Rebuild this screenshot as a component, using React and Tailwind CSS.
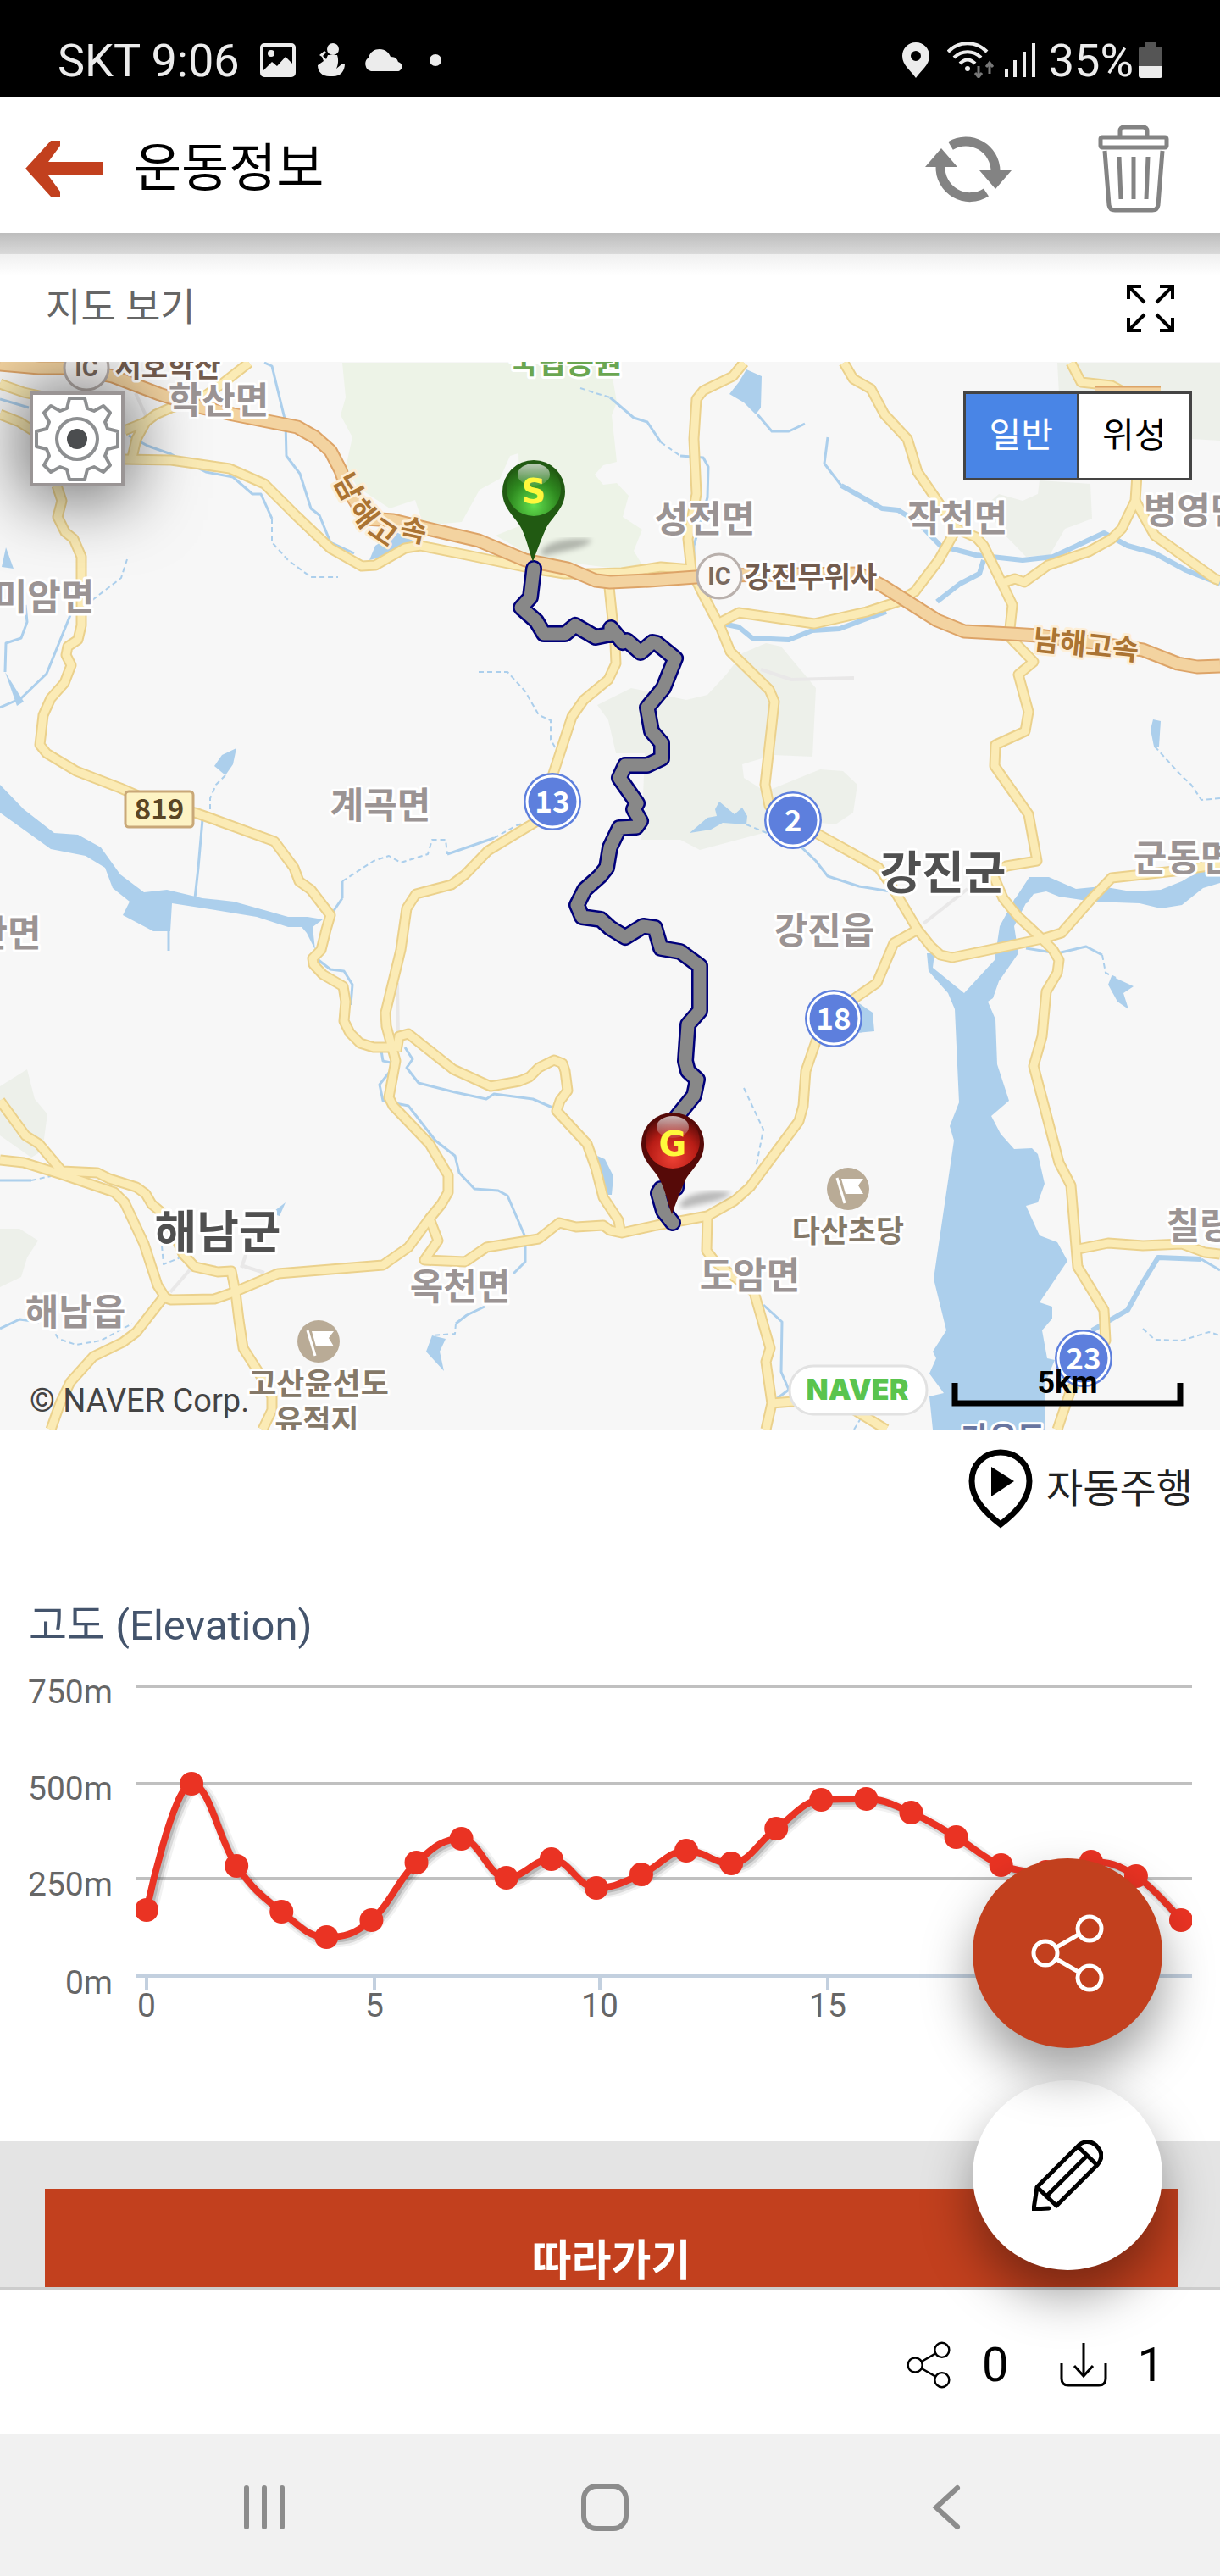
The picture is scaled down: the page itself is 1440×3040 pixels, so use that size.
import React, { useState } from 'react';

const GREENS = [
  '404,428 408,469 402,490 416,516 408,552 422,575 460,600 490,590 500,620 545,616 566,578 590,565 602,538 612,535 615,620 585,632 625,655 680,665 735,672 757,665 748,650 758,625 735,610 742,585 728,570 712,572 702,560 712,549 728,545 722,490 728,475 720,428',
  '876,771 904,759 922,763 963,812 959,893 913,891 876,902 878,918 897,930 904,934 968,908 995,910 1012,926 1007,959 986,973 968,971 901,983 826,1003 803,991 757,991 761,889 727,889 718,850 705,832 745,812 810,826 835,820 858,795',
  '1227,567 1225,583 1207,591 1179,583 1165,595 1179,624 1211,657 1239,655 1257,624 1289,612 1287,571',
  '1248,428 1440,428 1440,520 1406,518 1250,465',
  '0,1282 32,1262 41,1297 56,1315 50,1358 37,1366 0,1340',
  '0,1450 23,1450 45,1464 32,1484 25,1507 0,1519'
];

const LAKES = [
  '1214,1060 1197,1093 1202,1125 1179,1158 1172,1178 1166,1182 1175,1203 1177,1256 1191,1299 1170,1317 1181,1338 1197,1356 1218,1355 1225,1362 1233,1397 1225,1419 1211,1423 1227,1458 1248,1466 1260,1488 1227,1537 1242,1542 1242,1556 1230,1570 1236,1603 1245,1605 1234,1631 1234,1687 1101,1687 1097,1648 1114,1644 1097,1621 1105,1603 1101,1595 1117,1570 1102,1509 1126,1346 1121,1329 1132,1301 1127,1191 1119,1172 1096,1146 1094,1125 1103,1125 1101,1142 1138,1172 1174,1133 1180,1093 1198,1060',
  '1198,1061 1215,1035 1238,1035 1270,1049 1300,1046 1335,1052 1370,1050 1395,1040 1415,1028 1440,1028 1440,1042 1420,1048 1395,1068 1370,1072 1345,1066 1290,1064 1250,1058 1235,1052 1220,1055 1212,1066',
  '0,926 28,955 64,983 92,985 119,1000 142,1032 170,1053 197,1050 239,1060 276,1064 312,1074 340,1082 363,1082 381,1085 369,1094 372,1121 362,1101 356,1094 340,1094 303,1082 248,1073 203,1066 201,1099 181,1099 145,1080 153,1064 133,1048 124,1024 101,1010 60,1002 28,979 0,959',
  '262,891 279,883 275,902 266,915 253,904',
  '7,646 16,671 2,669',
  '6,793 28,828 20,833',
  '881,436 899,444 898,481 892,489 878,475 861,465 872,451',
  '814,983 835,965 846,963 844,955 849,946 867,961 876,953 882,963 881,973 853,971 839,979',
  '1361,849 1370,851 1368,881 1362,881 1358,861',
  '1312,1152 1338,1164 1326,1172 1332,1191 1319,1182 1308,1162',
  '1014,1184 1030,1195 1032,1217 1012,1219',
  '510,1576 526,1580 519,1595 524,1618 503,1595',
  '436,661 443,644 468,628 491,640 473,647 452,657',
  '705,1364 714,1368 724,1388 722,1410 714,1410',
  '337,1419 330,1435 320,1432'
];

const STREAMS = [
  '312,428 321,432 327,457 337,498 338,538 354,559 367,600 377,608 390,640 418,653',
  '152,514 174,526 202,536 243,557 275,563 298,583 308,583 321,612',
  '0,471 34,481',
  '30,714 32,734 25,753 7,759 6,793',
  '83,726 55,795 25,824 0,835',
  '239,967 234,1024 230,1060',
  '404,1060 404,1040',
  '528,1008 583,989',
  '404,1060 393,1076',
  '720,469 748,493 764,498 780,522',
  '803,538 830,540 836,551 835,587 819,644 819,669',
  '894,489 911,509 931,509 950,500',
  '977,516 973,547 993,573',
  '943,997 963,1016 977,1034 1014,1046 1051,1052',
  '1211,1119 1248,1125 1282,1117 1301,1127',
  '901,1540 923,1560 922,1619 931,1640 915,1652',
  '376,1133 390,1144 406,1146 416,1162 414,1186',
  '450,1240 452,1252 461,1254',
  '459,1266 448,1280 452,1299 482,1305 514,1346 537,1364 542,1384 560,1403 588,1405 599,1411 620,1460 620,1489 606,1503',
  '478,1236 487,1250 480,1260 494,1278 537,1289 574,1297 583,1291 629,1297 652,1307',
  '0,1393 37,1393',
  '0,1568 23,1557 46,1560',
  '572,1542 551,1552 538,1562',
  '199,1064 199,1122',
  '1418,1486 1440,1499'
];

const WIDE_STREAMS = [
  '993,573 1041,600 1060,602 1083,616 1110,644 1152,655 1207,661 1243,657 1303,629 1331,644 1363,653 1400,673 1440,689',
  '1161,661 1156,677 1133,689 1106,710',
  '853,736 872,740 888,753 931,755 959,744 991,742 1023,730 1046,722',
  '1289,1570 1331,1546 1349,1513 1367,1484 1418,1486'
];

const DOTTED_STREAMS = [
  '321,612 321,640 340,661 367,681 399,681',
  '150,660 143,682 104,712',
  '565,793 599,793 620,816 636,844 650,850 650,873 657,885',
  '266,915 255,926 248,942 248,955',
  '404,1040 441,1016 459,1010 473,1018 505,1008 510,991 526,991 528,1008',
  '583,989 610,974 634,967',
  '780,522 803,538',
  '881,973 905,983',
  '1363,881 1395,916 1406,926 1418,944 1440,942',
  '1301,1127 1305,1148 1317,1154',
  '1349,1568 1363,1581 1395,1582 1427,1572 1440,1576',
  '878,1284 901,1333 893,1374 896,1395',
  '60,1566 69,1580 90,1587 119,1582 156,1562',
  '538,1562 537,1574 510,1576',
  '191,1470 193,1492 218,1482',
  '37,1393 60,1388',
  '685,458 700,463 720,469',
  '1008,1687 1022,1664'
];

const ROADS = [
  '0,453 28,463 60,470',
  '0,489 23,498 45,512 60,525',
  '294,428 262,453 234,473 202,481 184,489 172,498 147,508',
  '172,498 161,518 156,540',
  '147,542 202,543 271,553 312,571 349,608 390,647 427,668 443,667 478,647 496,644 551,655 629,671 666,677 703,677 734,676 780,669 816,672',
  '67,573 73,591 68,610 77,628 87,636 96,657 96,738 92,755 80,763 78,773 84,785 76,806 60,824 51,844 47,879 55,889 90,910 142,930 188,950 230,959 250,966 324,993 347,1024 353,1040 367,1050 390,1080 385,1097 379,1121 369,1131 370,1138 381,1150 405,1164 408,1182 406,1205 413,1219 425,1231 441,1236 464,1236',
  '719,693 726,760 727,783 718,802 689,826 675,846 652,916 634,969 576,1004 549,1032 533,1044 491,1055 480,1072 473,1121 455,1195 456,1211 467,1252 459,1295 464,1305 507,1350 529,1387 529,1407 521,1421 507,1438 482,1472 452,1493 328,1503 276,1525 253,1533 202,1534 193,1531 161,1572 145,1584 110,1601 83,1631 71,1656 60,1687',
  '468,1240 471,1223 482,1220 535,1262 579,1282 613,1276 625,1271 636,1260 654,1251 664,1255 667,1264 670,1287 661,1299 657,1311 693,1350 703,1378 712,1413 720,1425 730,1440 732,1452',
  '507,1438 517,1464 501,1487 549,1489 574,1472 636,1462 660,1443 680,1448 712,1446 720,1452 734,1455 775,1446 835,1435 867,1417 885,1401 943,1323 948,1305 951,1264 963,1229 1009,1178 1035,1160 1055,1113 1083,1097',
  '0,1299 30,1340 46,1350 73,1382 115,1384 129,1391 161,1401 172,1409 179,1421 197,1436 216,1480 230,1495 257,1501 273,1500 278,1525 282,1558 287,1591 305,1619 321,1648 321,1664 310,1687',
  '0,1369 28,1372 73,1386 135,1407 147,1419 170,1468 186,1517 195,1531',
  '878,428 865,444 830,461 822,471 819,518 822,583 812,636 816,673 830,702 851,742 862,769 908,814 914,828 903,926 908,951 963,983 1037,1024 1052,1045 1083,1097 1099,1117 1110,1127 1124,1130 1230,1108 1253,1101 1289,1060 1312,1036 1386,1028 1440,1020',
  '996,428 1007,447 1028,459 1044,489 1071,518 1083,557 1129,624 1152,634 1161,644 1181,685 1195,714 1191,751 1220,781 1202,796 1214,840 1210,863 1175,879 1174,904 1214,961 1224,1016 1188,1022 1172,1032 1184,1060 1202,1082 1230,1108 1243,1121 1250,1133 1248,1148 1235,1170 1230,1223 1220,1258 1250,1372 1264,1399 1272,1495 1303,1546 1305,1582 1264,1640 1248,1687',
  '1129,624 1108,661 1080,698 1060,710 1023,722 961,736 872,723 851,734',
  '1186,687 1198,683 1209,687 1237,667 1285,651 1312,636 1324,624 1340,591 1342,560',
  '1340,591 1363,632 1434,683 1440,685',
  '1264,428 1276,451 1312,455 1340,470',
  '1273,1474 1308,1467 1349,1470 1395,1468 1422,1478 1440,1480',
  '835,1435 834,1476 844,1489 890,1525 909,1591 904,1607 911,1656 904,1687',
  '911,1656 936,1654 1005,1662 1046,1687'
];

const HIGHWAYS = [
  '0,430 46,434 78,434 101,438 133,444 188,465 239,481 275,489 351,504 372,516 390,532 402,555 409,575 432,612 464,614 505,624 565,638 620,661 670,671 703,685 720,687 766,685 821,681 849,679 1014,677 1041,691 1106,732 1138,745 1193,748 1225,750 1294,759 1349,767 1390,783 1413,787 1440,786',
  '1292,464 1370,464'
];

const ROUTE =
  '630,671 626,705 615,717 633,733 642,748 667,748 679,738 703,752 723,748 721,741 735,758 740,756 756,770 770,758 775,759 797,777 783,812 764,835 769,863 781,877 781,895 764,903 738,903 731,918 752,948 748,955 756,969 751,976 731,977 720,1000 716,1024 708,1034 690,1050 681,1068 687,1082 709,1085 720,1095 738,1106 759,1093 773,1095 780,1119 803,1123 826,1140 826,1193 812,1209 809,1252 812,1264 823,1274 819,1293 793,1325 800,1370 798,1402 780,1403 777,1408 783,1429 794,1443';

const TOWNS = [
  { name: '학산면', x: 258, y: 488 },
  { name: '미암면', x: 52, y: 720 },
  { name: '계곡면', x: 449, y: 966 },
  { name: '성전면', x: 832, y: 628 },
  { name: '작천면', x: 1130, y: 627 },
  { name: '병영면', x: 1409, y: 618 },
  { name: '군동면', x: 1397, y: 1028 },
  { name: '산면', x: 9, y: 1117 },
  { name: '강진읍', x: 973, y: 1114 },
  { name: '도암면', x: 885, y: 1521 },
  { name: '칠량면', x: 1436, y: 1462 },
  { name: '해남읍', x: 89, y: 1564 },
  { name: '옥천면', x: 543, y: 1534 }
];

const COUNTIES = [
  { name: '강진군', x: 1113, y: 1050 },
  { name: '해남군', x: 257, y: 1474 }
];

const ROUTE_BADGES = [
  { no: '13', x: 652, y: 946 },
  { no: '2', x: 936, y: 968 },
  { no: '18', x: 984, y: 1202 },
  { no: '23', x: 1279, y: 1603 }
];

const INTERCHANGES = [
  { x: 102, y: 434 },
  { x: 849, y: 680 }
];

const LANDMARKS = [
  { x: 376, y: 1583 },
  { x: 1001, y: 1403 }
];

// one sample per km, in chart pixels
const ELEVATION = [
  307, 158, 255, 309, 339, 319, 251, 223, 269, 247, 281, 265,
  237, 252, 211, 177, 176, 192, 221, 254, 262, 250, 267, 319
];
const POINTS = ELEVATION.map((y, i) => ({ x: 173 + (i * 1221) / 23, y }));

const GRID = [
  { label: '750m', y: 43, text: 63 },
  { label: '500m', y: 158, text: 177 },
  { label: '250m', y: 270, text: 290 }
];

const TICKS = [
  { label: '0', x: 173 },
  { label: '5', x: 442 },
  { label: '10', x: 708 },
  { label: '15', x: 977 },
  { label: '20', x: 1243 }
];

function splinePath(points) {
  let d = `M${points[0].x} ${points[0].y}`;
  let right = points[0];
  for (let i = 1; i < points.length; i++) {
    const p = points[i];
    const prev = points[i - 1];
    const next = points[i + 1];
    let left = p;
    let nextRight = p;
    if (next) {
      const lx = (1.5 * p.x + prev.x) / 2.5;
      const rx = (1.5 * p.x + next.x) / 2.5;
      let ly = (1.5 * p.y + prev.y) / 2.5;
      let ry = (1.5 * p.y + next.y) / 2.5;
      const fix = ((ry - ly) * (rx - p.x)) / (rx - lx) + p.y - ry;
      ly += fix;
      ry += fix;
      // keep the curve from overshooting its neighbours
      if (ly > prev.y && ly > p.y) {
        ly = Math.max(prev.y, p.y);
        ry = 2 * p.y - ly;
      } else if (ly < prev.y && ly < p.y) {
        ly = Math.min(prev.y, p.y);
        ry = 2 * p.y - ly;
      }
      if (ry > next.y && ry > p.y) {
        ry = Math.max(next.y, p.y);
        ly = 2 * p.y - ry;
      } else if (ry < next.y && ry < p.y) {
        ry = Math.min(next.y, p.y);
        ly = 2 * p.y - ry;
      }
      left = { x: lx, y: ly };
      nextRight = { x: rx, y: ry };
    }
    d += ` C${right.x} ${right.y} ${left.x} ${left.y} ${p.x} ${p.y}`;
    right = nextRight;
  }
  return d;
}

function Lines({ items, color, width, dash }) {
  return items.map((points) => (
    <polyline
      key={points}
      points={points}
      fill="none"
      stroke={color}
      strokeWidth={width}
      strokeDasharray={dash}
      strokeLinejoin="round"
    />
  ));
}

function Pin({ x, y, letter, dark, mid, light }) {
  const id = `pin-${letter}`;
  return (
    <g transform={`translate(${x} ${y})`}>
      <defs>
        <radialGradient id={id} cx="0.5" cy="0.8" r="0.75">
          <stop offset="0" stopColor={light} />
          <stop offset="0.6" stopColor={mid} />
          <stop offset="1" stopColor={dark} />
        </radialGradient>
        <linearGradient id={`${id}-shine`} x1="0" y1="0" x2="0" y2="1">
          <stop offset="0" stopColor="#fff" stopOpacity="0.7" />
          <stop offset="1" stopColor="#fff" stopOpacity="0.1" />
        </linearGradient>
        <filter id={`${id}-blur`}>
          <feGaussianBlur stdDeviation="3" />
        </filter>
      </defs>
      <path d="M8 72C15 58 45 54 68 57C66 66 36 70 12 76Z" fill="#000" opacity="0.25" filter={`url(#${id}-blur)`} />
      <path d="M-37 0A37 37 0 0 1 37 0C37 22 19 31 13 47C7 61 3 72 -1 83C-5 72 -7 61 -13 47C-19 31 -37 22 -37 0Z" fill={dark} />
      <circle cy="-3" r="32" fill={`url(#${id})`} />
      <ellipse cy="-20" rx="19" ry="13" fill={`url(#${id}-shine)`} />
      <text y="14" textAnchor="middle" fontSize="40" className="font-['DejaVu_Sans',sans-serif] font-bold" fill="#fff83c">
        {letter}
      </text>
    </g>
  );
}

function MapCanvas() {
  return (
    <svg viewBox="0 427 1440 1260" preserveAspectRatio="xMidYMid slice" className="block h-full w-full bg-[#f7f7f7]">
      {GREENS.map((points, i) => (
        <polygon key={points} points={points} fill={i === 0 ? '#edf3e7' : '#edf0ea'} />
      ))}
      {LAKES.map((points) => (
        <polygon key={points} points={points} fill="#accfec" />
      ))}
      <Lines items={STREAMS} color="#accfec" width="3" />
      <Lines items={WIDE_STREAMS} color="#accfec" width="6" />
      <Lines items={DOTTED_STREAMS} color="#accfec" width="2" dash="6 4" />
      <Lines
        items={['201,1525 228,1494', '285,1496 292,1475', '287,1494 312,1502', '1090,1090 1142,1049', '898,790 934,802 1008,800', '469,1160 470,1225', '160,464 172,490 168,500']}
        color="#e9e8e8"
        width="4"
      />
      <Lines items={ROADS} color="#ebd18c" width="13" />
      <Lines items={ROADS} color="#fbebb5" width="9" />
      <Lines items={HIGHWAYS} color="#dda468" width="17" />
      <Lines items={HIGHWAYS} color="#f3d3a0" width="13" />

      {INTERCHANGES.map((ic) => (
        <g key={ic.x}>
          <circle cx={ic.x} cy={ic.y} r="26" fill="#faf8f7" stroke="#b9b0ac" strokeWidth="3" />
          <text x={ic.x} y={ic.y + 10} textAnchor="middle" fontSize="29" className="font-bold" fill="#7a6a60">
            IC
          </text>
        </g>
      ))}

      <g textAnchor="middle" stroke="#fff" strokeWidth="6" strokeLinejoin="round" paintOrder="stroke" className="font-['Noto_Sans_CJK_KR',sans-serif] font-bold">
        <g fontSize="43" fill="#9b9494">
          {TOWNS.map((t) => (
            <text key={t.name} x={t.x} y={t.y}>{t.name}</text>
          ))}
        </g>
        <g fontSize="54" fill="#505050">
          {COUNTIES.map((c) => (
            <text key={c.name} x={c.x} y={c.y}>{c.name}</text>
          ))}
        </g>
        <g fontSize="34" fill="#735c4e">
          <text x="198" y="445">서호학산</text>
          <text x="957" y="693">강진무위사</text>
        </g>
        <g fontSize="36" fill="#857969">
          <text x="1001" y="1466">다산초당</text>
          <text x="376" y="1646">고산윤선도</text>
          <text x="374" y="1690">유적지</text>
        </g>
        <text x="668" y="441" fontSize="36" fill="#6aa651">국립공원</text>
        <text x="1184" y="1710" fontSize="36" fill="#6875a0">가우도</text>
        <g fontSize="34" fill="#ab7433" stroke="#fdeed6">
          <text transform="translate(411 575) rotate(62)" y="12">남</text>
          <text transform="translate(429 606) rotate(52)" y="12">해</text>
          <text transform="translate(452 628) rotate(34)" y="12">고</text>
          <text transform="translate(488 626) rotate(12)" y="12">속</text>
          <text transform="translate(1282 761) rotate(6)" y="12">남해고속</text>
        </g>
      </g>

      {LANDMARKS.map((m) => (
        <g key={m.x} transform={`translate(${m.x} ${m.y})`}>
          <circle r="25" fill="#b9ab96" />
          <path d="M-13 -13L-4 17" stroke="#fff" strokeWidth="3" />
          <path d="M-8 -12H18L12 -4L18 6H-3Z" fill="#fff" />
        </g>
      ))}

      <rect x="148" y="934" width="80" height="42" rx="4" fill="#fdf3c4" stroke="#c9a878" strokeWidth="3" />
      <text x="188" y="967" textAnchor="middle" fontSize="33" className="font-['Noto_Sans_CJK_KR',sans-serif] font-bold" fill="#5a4524">819</text>

      {ROUTE_BADGES.map((b) => (
        <g key={b.no}>
          <circle cx={b.x} cy={b.y} r="34" fill="#5d7fdd" />
          <circle cx={b.x} cy={b.y} r="30" fill="none" stroke="#fff" strokeWidth="3" />
          <text x={b.x} y={b.y + 13} textAnchor="middle" fontSize="35" className="font-['Noto_Sans_CJK_KR',sans-serif] font-bold" fill="#fff">
            {b.no}
          </text>
        </g>
      ))}

      <polyline points={ROUTE} fill="none" stroke="#00007a" strokeWidth="20" strokeLinejoin="round" strokeLinecap="round" />
      <polyline points={ROUTE} fill="none" stroke="#888" strokeWidth="15" strokeLinejoin="round" strokeLinecap="round" />
      <Pin x={630} y={580} letter="S" dark="#215a12" mid="#2f8a20" light="#62e04e" />
      <Pin x={794} y={1350} letter="G" dark="#560a08" mid="#b81d16" light="#ee4134" />

      <text x="35" y="1666" fontSize="38" fill="#444">© NAVER Corp.</text>
      <rect x="932" y="1612" width="162" height="57" rx="28" fill="#fff" stroke="#e2e2e2" strokeWidth="3" />
      <text x="1012" y="1652" textAnchor="middle" fontSize="34" className="font-['Inter',sans-serif] font-black" fill="#5ac44e">
        NAVER
      </text>
      <path d="M1127 1632V1656H1393V1632" fill="none" stroke="#000" strokeWidth="7" />
      <text x="1260" y="1644" textAnchor="middle" fontSize="36" className="font-bold" fill="#000">5km</text>
    </svg>
  );
}

function ShareIcon({ className, strokeWidth }) {
  return (
    <svg viewBox="0 0 86 92" className={className} fill="none" stroke="currentColor" strokeWidth={strokeWidth}>
      <circle cx="17" cy="46" r="14" />
      <circle cx="69" cy="17" r="14" />
      <circle cx="69" cy="75" r="14" />
      <path d="M30 39L56 24M30 53L56 68" />
    </svg>
  );
}

function StatusBar() {
  return (
    <div className="flex h-[114px] shrink-0 items-center justify-between bg-black pt-7 pr-[68px] pl-[68px] text-[54px] text-[#ececec]">
      <div className="flex items-center">
        <span>SKT 9:06</span>
        <svg viewBox="0 0 42 40" className="ml-6 h-10 w-[42px]" fill="none">
          <rect x="2" y="2" width="38" height="36" rx="3" stroke="currentColor" strokeWidth="4" />
          <circle cx="13" cy="12" r="4" fill="currentColor" />
          <path d="M4 32L14 22L20 27L30 16L38 24V36H4Z" fill="currentColor" />
        </svg>
        <svg viewBox="0 0 36 40" className="ml-6 h-10 w-9" fill="currentColor">
          <circle cx="20" cy="7" r="7" />
          <path d="M14 14H25C27 20 26 26 24 30L30 25L34 24C34 34 28 40 18 39C8 40 2 34 2 26L9 21L7 16L4 14L10 9L12 11L8 15L12 19Z" />
        </svg>
        <svg viewBox="0 0 46 26" className="ml-5 h-[26px] w-[46px]" fill="currentColor">
          <path d="M9 26A9 9 0 0 1 6 10C8 3 13 0 19 0C26 0 30 4 32 9C38 9 40 12 41 15C48 17 46 26 40 26Z" />
        </svg>
        <span className="ml-8 h-3.5 w-3.5 rounded-full bg-[#ececec]" />
      </div>
      <div className="flex items-center">
        <svg viewBox="0 0 34 42" className="h-[42px] w-[34px]" fill="currentColor" fillRule="evenodd">
          <path d="M17 0C26 0 33 7 33 16C33 27 23 33 17 42C11 33 1 27 1 16C1 7 8 0 17 0ZM17 10A6 6 0 1 0 17 22A6 6 0 1 0 17 10Z" />
        </svg>
        <svg viewBox="0 0 56 42" className="ml-5 h-[42px] w-14" fill="none" stroke="currentColor" strokeWidth="4">
          <path d="M1 11C14 -2 34 -2 47 11M8 18C17 9 31 9 40 18M15 25C21 19 27 19 33 25" />
          <circle cx="24" cy="31" r="3" fill="currentColor" stroke="none" />
          <path d="M37 28V40M33 36L37 41L41 36M50 37V24M46 29L50 24L54 29" stroke="#777" strokeWidth="3" />
        </svg>
        <svg viewBox="0 0 36 40" className="ml-3 h-10 w-9" fill="none" stroke="currentColor" strokeWidth="4">
          <path d="M2 40V30M12 40V20M23 40V10M34 40V0" />
        </svg>
        <span className="ml-4">35%</span>
        <svg viewBox="0 0 28 42" className="ml-1.5 h-[42px] w-7">
          <path d="M8 0H20V5H25Q28 5 28 8V28H0V8Q0 5 3 5H8Z" fill="#555" />
          <path d="M0 28H28V39Q28 42 25 42H3Q0 42 0 39Z" fill="currentColor" />
        </svg>
      </div>
    </div>
  );
}

function Header() {
  return (
    <header className="flex h-[161px] shrink-0 items-center bg-white pt-2 pr-[60px] pl-[30px]">
      <button aria-label="뒤로" className="text-[#c2401e]">
        <svg viewBox="0 0 92 66" className="block h-[66px] w-[92px]" fill="currentColor">
          <path d="M0 33L30 0H41V6L27 25H92V41H27L41 60V66H30Z" />
        </svg>
      </button>
      <h1 className="ml-9 flex-1 text-[61px] leading-[72px] text-black">운동정보</h1>
      <button aria-label="새로고침" className="text-[#838383]">
        <svg viewBox="0 0 102 82" className="block h-[82px] w-[102px]" fill="none">
          <path d="M30 14A35 35 0 0 1 83 44M72 69A35 35 0 0 1 18 38" stroke="currentColor" strokeWidth="11" />
          <path d="M64 43H102L83 65ZM0 39H38L19 17Z" fill="currentColor" />
        </svg>
      </button>
      <button aria-label="삭제" className="ml-[102px] text-[#838383]">
        <svg viewBox="0 0 84 104" className="block h-[104px] w-[84px]" fill="none" stroke="currentColor" strokeWidth="5">
          <path d="M26 14V8Q26 3 31 3H53Q58 3 58 8V14" />
          <rect x="3" y="15" width="78" height="12" rx="2" />
          <path d="M8 31L13 95Q14 101 20 101H64Q70 101 71 95L76 31M25 38L27 88M42 38V88M59 38L57 88" />
        </svg>
      </button>
    </header>
  );
}

function MapSection() {
  const [mode, setMode] = useState('normal');
  const modeClass = (value) =>
    mode === value ? 'flex-1 bg-[#4985e6] text-white' : 'flex-1 bg-white text-black';

  return (
    <section>
      <div className="flex h-[127px] items-center justify-between bg-linear-to-b from-[#f0f0f0] to-white to-20% px-[54px]">
        <h2 className="text-[45px] leading-[52px] text-[#666]">지도 보기</h2>
        <button aria-label="전체 화면">
          <svg viewBox="0 0 56 56" className="block h-14 w-14" fill="none" stroke="#000" strokeWidth="4">
            <path d="M2 17V2H17M39 2H54V17M2 39V54H17M39 54H54V39M2 2L21 21M54 2L35 21M2 54L21 35M54 54L35 35" />
          </svg>
        </button>
      </div>
      <div className="relative h-[1260px] overflow-hidden">
        <MapCanvas />
        <button
          aria-label="지도 설정"
          className="absolute top-[35px] left-[35px] flex h-28 w-28 items-center justify-center border-4 border-[#9a9595] bg-white shadow-[0_4px_80px_10px_rgba(0,0,0,0.55)]"
        >
          <svg viewBox="-52 -52 104 104" className="block h-[104px] w-[104px] shrink-0" fill="none" stroke="#8d8f91" strokeWidth="4" strokeLinejoin="round">
            <path d="M-9 -48H9L12 -36L20 -33L31 -39L39 -31L33 -20L36 -12L48 -9V9L36 12L33 20L39 31L31 39L20 33L12 36L9 48H-9L-12 36L-20 33L-31 39L-39 31L-33 20L-36 12L-48 9V-9L-36 -12L-33 -20L-39 -31L-31 -39L-20 -33L-12 -36Z" />
            <circle r="24" />
            <circle r="12" fill="#4b4d4f" stroke="none" />
          </svg>
        </button>
        <div className="absolute top-[35px] right-[33px] flex h-[105px] w-[270px] divide-x-3 divide-[#444] border-3 border-[#444] text-[41px]">
          <button className={modeClass('normal')} onClick={() => setMode('normal')}>일반</button>
          <button className={modeClass('satellite')} onClick={() => setMode('satellite')}>위성</button>
        </div>
      </div>
    </section>
  );
}

function ElevationChart() {
  const line = splinePath(POINTS);
  return (
    <svg viewBox="0 0 1440 580" className="block w-full" fontSize="39" fill="#666">
      <defs>
        <clipPath id="plot">
          <rect x="161" y="20" width="1246" height="380" />
        </clipPath>
      </defs>
      {GRID.map((g) => (
        <g key={g.label}>
          <path d={`M161 ${g.y}H1407`} stroke="#c0c0c0" strokeWidth="4" />
          <text x="133" y={g.text} textAnchor="end">{g.label}</text>
        </g>
      ))}
      <path d="M161 385H1407" stroke="#c3d0df" strokeWidth="4" />
      <text x="133" y="406" textAnchor="end">0m</text>
      {TICKS.map((t) => (
        <g key={t.label}>
          <path d={`M${t.x} 385V401`} stroke="#c3d0df" strokeWidth="4" />
          <text x={t.x} y="433" textAnchor="middle">{t.label}</text>
        </g>
      ))}
      <g clipPath="url(#plot)" fill="none" strokeLinejoin="round">
        <g transform="translate(4 4)" stroke="#000">
          <path d={line} strokeWidth="17" opacity="0.05" />
          <path d={line} strokeWidth="11" opacity="0.1" />
          <path d={line} strokeWidth="5" opacity="0.15" />
        </g>
        <path d={line} stroke="#ea3323" strokeWidth="8" />
        {POINTS.map((p) => (
          <circle key={p.x} cx={p.x} cy={p.y} r="14" fill="#ea3323" />
        ))}
      </g>
    </svg>
  );
}

function FloatingActions() {
  return (
    <div className="absolute right-[68px] bottom-5 flex flex-col gap-[38px]">
      <button
        aria-label="공유"
        className="relative z-10 flex h-56 w-56 items-center justify-center rounded-full bg-[#c2401e] text-white shadow-[0_30px_60px_rgba(0,0,0,0.38)]"
      >
        <ShareIcon className="h-[92px] w-[86px]" strokeWidth="5" />
      </button>
      <button
        aria-label="편집"
        className="flex h-56 w-56 items-center justify-center rounded-full bg-white text-black shadow-[0_30px_60px_rgba(0,0,0,0.38)]"
      >
        <svg viewBox="0 0 84 84" className="h-[84px] w-[84px]" fill="none" stroke="currentColor" strokeWidth="5" strokeLinejoin="round" strokeLinecap="round">
          <path d="M20 81L2 82L6 56L54 8C60 1 69 1 76 7C83 14 84 22 77 30L29 78L6 56M17 67L63 21M54 8L77 30" />
        </svg>
      </button>
    </div>
  );
}

function BottomBar() {
  return (
    <div className="flex h-[173px] shrink-0 items-center justify-end border-t-3 border-[#ccc] bg-white pt-2 pr-[66px] text-[56px] text-black">
      <button className="flex items-center" aria-label="공유 수">
        <ShareIcon className="h-14 w-[54px]" strokeWidth="4" />
        <span className="ml-9">0</span>
      </button>
      <button className="ml-[60px] flex items-center" aria-label="다운로드 수">
        <svg viewBox="0 0 56 52" className="h-[52px] w-14" fill="none" stroke="currentColor" strokeWidth="3">
          <path d="M28 0V38M17 27L28 39L39 27M2 24V42Q2 50 10 50H46Q54 50 54 42V24" />
        </svg>
        <span className="ml-9">1</span>
      </button>
    </div>
  );
}

function SystemNav() {
  return (
    <nav className="flex h-[168px] shrink-0 items-center justify-between bg-[#f1f1f1] pt-1.5 pr-[297px] pl-[285px] text-[#8c8c8c]">
      <button aria-label="최근 앱">
        <svg viewBox="0 0 56 56" className="block h-14 w-14" stroke="currentColor" strokeWidth="6" strokeLinecap="round">
          <path d="M6 5V51M27 5V51M48 5V51" />
        </svg>
      </button>
      <button aria-label="홈">
        <svg viewBox="0 0 56 56" className="block h-14 w-14" fill="none" stroke="currentColor" strokeWidth="6">
          <rect x="3" y="3" width="50" height="50" rx="15" />
        </svg>
      </button>
      <button aria-label="이전">
        <svg viewBox="0 0 56 56" className="block h-14 w-14" fill="none" stroke="currentColor" strokeWidth="6" strokeLinecap="round">
          <path d="M43 5L18 28L43 51" />
        </svg>
      </button>
    </nav>
  );
}

export default function App() {
  return (
    <div className="flex h-screen flex-col overflow-hidden bg-white font-['Roboto','Noto_Sans_CJK_KR',sans-serif]">
      <StatusBar />
      <Header />
      <div className="h-[25px] shrink-0 bg-linear-to-b from-[#bdbdbd] to-[#dadada]" />
      <div className="relative min-h-0 flex-1">
        <main className="h-full overflow-hidden">
          <MapSection />
          <div className="flex h-[140px] items-center justify-end pr-8">
            <button className="flex items-center gap-4 text-[47px] text-[#222]">
              <svg viewBox="0 0 76 94" className="h-[94px] w-[76px]">
                <path d="M38 4C57 4 72 18 72 38C72 59 56 75 38 89C20 75 4 59 4 38C4 18 19 4 38 4Z" fill="none" stroke="#000" strokeWidth="7" />
                <path d="M27 21L54 38L27 56Z" fill="#000" />
              </svg>
              자동주행
            </button>
          </div>
          <section>
            <h2 className="pt-16 pl-[34px] text-[49px] leading-14 text-[#44546c]">고도 (Elevation)</h2>
            <ElevationChart />
          </section>
          <div className="bg-[#e4e4e4] pt-14 pr-[50px] pb-14 pl-[53px]">
            <button className="h-[172px] w-full bg-[#c2401e] text-[51px] font-bold text-white">따라가기</button>
          </div>
        </main>
        <FloatingActions />
      </div>
      <BottomBar />
      <SystemNav />
    </div>
  );
}
